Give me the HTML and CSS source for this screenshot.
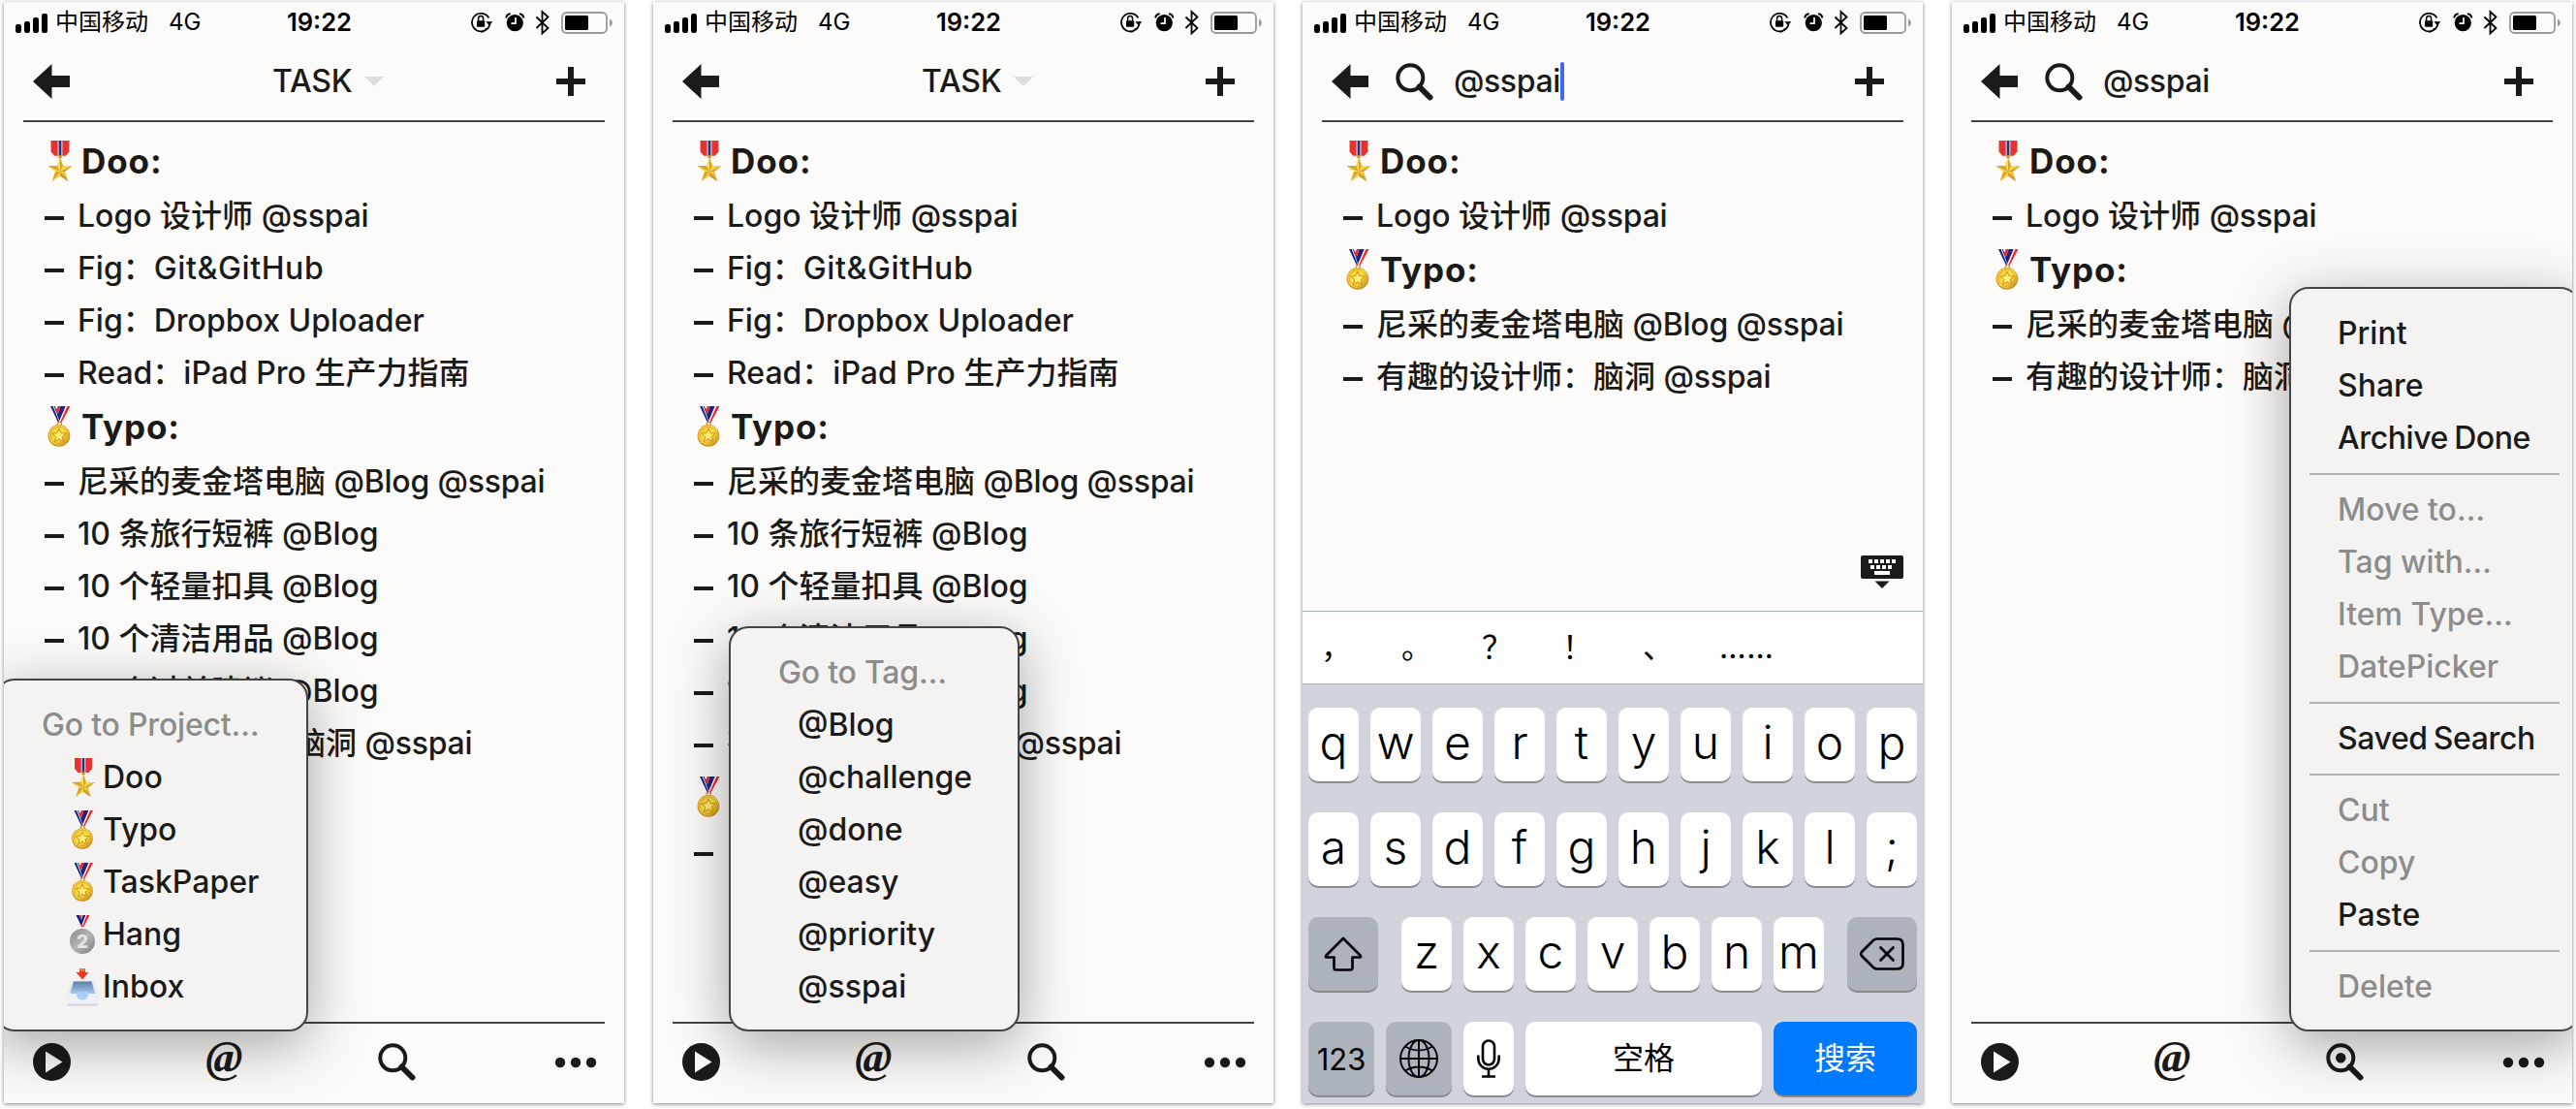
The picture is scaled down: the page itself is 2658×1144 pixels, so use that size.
FILE: index.html
```html
<!DOCTYPE html>
<html lang="zh-CN">
<head>
<meta charset="utf-8">
<title>TASK</title>
<link rel="stylesheet" href="styles.css">
</head>
<body>
<svg class="sprite" width="0" height="0" aria-hidden="true">
  <defs>
    <linearGradient id="gold" x1="0" y1="0" x2="1" y2="1"><stop offset="0" stop-color="#f2c62f"/><stop offset=".5" stop-color="#fbe04a"/><stop offset="1" stop-color="#c58a18"/></linearGradient>
    <linearGradient id="silver" x1="0" y1="0" x2="1" y2="1"><stop offset="0" stop-color="#8a8a8a"/><stop offset=".5" stop-color="#b4b4b4"/><stop offset="1" stop-color="#7c7c7c"/></linearGradient>
    <linearGradient id="tray" x1="0" y1="0" x2="0" y2="1"><stop offset="0" stop-color="#5b7da8"/><stop offset="1" stop-color="#a9cbf0"/></linearGradient>
    <symbol id="signal" viewBox="0 0 33 20"><rect x="0" y="11" width="6" height="9" rx="2.2"/><rect x="9" y="8" width="6" height="12" rx="2.2"/><rect x="18" y="4" width="6" height="16" rx="2.2"/><rect x="27" y="0" width="6" height="20" rx="2.2"/></symbol>
    <symbol id="status" viewBox="0 0 150 28">
      <path d="M20.5 15.5A9.3 9.3 0 1 1 19.4 9.5M17.2 20.4A9.3 9.3 0 0 1 11 24" fill="none" stroke="#000" stroke-width="1.7"/>
      <path d="M16.5 13.2h6.8l-3.4 4.2z"/><rect x="7" y="12.2" width="8.2" height="6.6" rx="1"/><path d="M8.6 12.5v-2.3a2.5 2.6 0 0 1 5 0v2.3" fill="none" stroke="#000" stroke-width="1.5"/>
      <circle cx="46.3" cy="14.6" r="8.6"/><path d="M37.2 9.5a5 5 0 0 1 4.500-4.300M55.400 9.500a5 5 0 0 0-4.500-4.300" stroke="#000" stroke-width="2" fill="none"/>
      <path d="M47 9v6.2h-4.500" fill="none" stroke="#fcfbf9" stroke-width="1.7"/>
      <path d="M68.500 8.500l12 11.500-6 5.500V3l6 5.500-12 11.500" fill="none" stroke="#000" stroke-width="1.8"/>
      <rect x="95" y="4" width="46" height="21" rx="4.500" fill="none" stroke="#999" stroke-width="1.8"/><rect x="98" y="7" width="24" height="15" rx="1.500"/><path d="M144 10.500q3 1.500 3 4t-3 4z" fill="#999"/>
    </symbol>
    <symbol id="back" viewBox="0 0 38 36"><path d="M0 18 19.500 0v12H38v12H19.500v12z"/></symbol>
    <symbol id="plus" viewBox="0 0 30 30"><path d="M12 0h6v12h12v6H18v12h-6V18H0v-6h12z"/></symbol>
    <symbol id="search" viewBox="0 0 39 39"><circle cx="15.3" cy="15.3" r="13" fill="none" stroke="#1a1a1a" stroke-width="4"/><path d="M24.500 24.500 35.500 35.500" stroke="#1a1a1a" stroke-width="6" stroke-linecap="round"/></symbol>
    <symbol id="play" viewBox="0 0 39 39"><circle cx="19.500" cy="19.500" r="19.500"/><path d="M13 8.500v22l17.500-11z" fill="#fbfaf8"/></symbol>
    <symbol id="dots" viewBox="0 0 44 12"><circle cx="6" cy="6" r="5.2"/><circle cx="22" cy="6" r="5.2"/><circle cx="38" cy="6" r="5.2"/></symbol>
    <symbol id="star" viewBox="0 0 38 40"><path d="M10 0h18v11l-3.500 4h-11L10 11z" fill="#e8322f"/><path d="M16.700 0h4.600v15h-4.600z" fill="#e9e3ee"/><path d="M17.700 0h2.600v15h-2.600z" fill="#24367f"/><circle cx="19" cy="16" r="1.800" fill="#cf9a20"/><path d="M19 16.500l3 8.300 9 .2-7.200 5.400L26.700 40 19 34.800 11.300 40l2.900-9.600L7 25l9-.2z" fill="url(#gold)"/><path d="M19 30.500V17l3 7.800zM19 30.500l12-5.500-7.200 5.400zM19 30.500l7.700 9.500L19 34.800zM19 30.500l-7.700 9.500 2.900-9.600zM19 30.500 7 25l9-.2z" fill="#b9791a" opacity=".55"/></symbol>
    <symbol id="medal" viewBox="0 0 38 40"><path d="M9.500 0h4.500l5.500 14-2 3z" fill="#1a2380"/><path d="M12 0h1l5.500 14-.6.6z" fill="#fff"/><path d="M29 0h-4.500l-7 15 2.500 2z" fill="#f5222b"/><path d="M24.500 0h-5l-3 9 2 6z" fill="#1a2380"/><path d="M26 0h-1.500l-6.500 15 1 1z" fill="#fff"/><path d="M17 0h2.500l-2.800 8-1.700-4z" fill="#f5222b"/><circle cx="18.300" cy="17.500" r="2" fill="none" stroke="#cfa02a" stroke-width="1.200"/><circle cx="18" cy="29" r="10.800" fill="#c8911e"/><circle cx="18" cy="28.500" r="10" fill="url(#gold)"/><circle cx="18" cy="28.600" r="8.300" fill="none" stroke="#d9a522" stroke-width=".8"/><path d="M18 22l2 4.400 4.800.4-3.700 3.200 1.200 4.700-4.300-2.500-4.300 2.500 1.200-4.700-3.700-3.200 4.800-.4z" fill="#ffec6b" stroke="#c48c17" stroke-width=".9"/></symbol>
    <symbol id="second" viewBox="0 0 38 40"><path d="M11.500 0h3.500l4 10-1.500 2.500z" fill="#1a2380"/><path d="M25.500 0H22l-5 11 2 1.500z" fill="#f5222b"/><path d="M21.500 0h-3l-2 6 1.500 4.500z" fill="#1a2380"/><path d="M22.500 0h-1l-4 10 .8 1z" fill="#fff"/><path d="M15.500 0h2l-1.200 5z" fill="#f5222b"/><circle cx="18" cy="27" r="13" fill="url(#silver)"/><text class="medal-digit" x="18" y="33.800" text-anchor="middle">2</text></symbol>
    <symbol id="inbox" viewBox="0 0 38 40"><path d="M15 1h6v4h3.500L18 12.500 11.500 5H15z" fill="#ee3424"/><path d="M15.300 1h5.400v3h-5.400z" fill="#f47b2a"/><path d="M7 13.500h22.500l4 14V39.500H2.700v-12z" fill="#e4e7ee"/><path d="M9 14.500h18.500l3.500 12.500H5.500z" fill="url(#tray)"/><path d="M3 27h8.500q1 6.500 6.500 6.500t6.500-6.500H33.500V39.500H2.700z" fill="#eef0f5"/><path d="M12 25h12q.5 8.500-6 8.500T12 25z" fill="#a6ccf7"/><path d="M2.700 37.500h30.800v2H2.700z" fill="#cfd3dc"/></symbol>
  </defs>
</svg>

<main class="gallery">

  <section class="phone">
    <header class="status"><svg class="signal"><use href="#signal"/></svg><span class="carrier">中国移动</span><span class="network">4G</span><span class="clock">19:22</span><svg class="indicators"><use href="#status"/></svg></header>
    <nav class="nav"><svg class="back"><use href="#back"/></svg><h1 class="title">TASK<i class="caret"></i></h1><svg class="plus"><use href="#plus"/></svg></nav>
    <ul class="list">
      <li class="project"><svg class="emoji"><use href="#star"/></svg>Doo:</li>
      <li class="task">Logo 设计师 <span class="tag">@sspai</span></li>
      <li class="task">Fig：<span class="wide">Git&amp;GitHub</span></li>
      <li class="task">Fig：Dropbox Uploader</li>
      <li class="task">Read：iPad Pro 生产力指南</li>
      <li class="project"><svg class="emoji"><use href="#medal"/></svg>Typo:</li>
      <li class="task">尼采的麦金塔电脑 <span class="tag">@Blog</span> <span class="tag">@sspai</span></li>
      <li class="task">10 条旅行短裤 @Blog</li>
      <li class="task">10 个轻量扣具 @Blog</li>
      <li class="task">10 个清洁用品 @Blog</li>
      <li class="task">10 个过关建议 @Blog</li>
      <li class="task">有趣的设计师：脑洞 <span class="tag">@sspai</span></li>
    </ul>
    <footer class="toolbar"><svg class="tool"><use href="#play"/></svg><span class="tool at">@</span><svg class="tool lens"><use href="#search"/></svg><svg class="more"><use href="#dots"/></svg></footer>
    <div class="menu menu-projects">
      <p class="menu-title">Go to Project…</p>
      <ul class="menu-list">
        <li><svg class="emoji"><use href="#star"/></svg>Doo</li>
        <li><svg class="emoji"><use href="#medal"/></svg>Typo</li>
        <li><svg class="emoji"><use href="#medal"/></svg>TaskPaper</li>
        <li><svg class="emoji"><use href="#second"/></svg>Hang</li>
        <li><svg class="emoji"><use href="#inbox"/></svg>Inbox</li>
      </ul>
    </div>
  </section>

  <section class="phone">
    <header class="status"><svg class="signal"><use href="#signal"/></svg><span class="carrier">中国移动</span><span class="network">4G</span><span class="clock">19:22</span><svg class="indicators"><use href="#status"/></svg></header>
    <nav class="nav"><svg class="back"><use href="#back"/></svg><h1 class="title">TASK<i class="caret"></i></h1><svg class="plus"><use href="#plus"/></svg></nav>
    <ul class="list">
      <li class="project"><svg class="emoji"><use href="#star"/></svg>Doo:</li>
      <li class="task">Logo 设计师 <span class="tag">@sspai</span></li>
      <li class="task">Fig：<span class="wide">Git&amp;GitHub</span></li>
      <li class="task">Fig：Dropbox Uploader</li>
      <li class="task">Read：iPad Pro 生产力指南</li>
      <li class="project"><svg class="emoji"><use href="#medal"/></svg>Typo:</li>
      <li class="task">尼采的麦金塔电脑 <span class="tag">@Blog</span> <span class="tag">@sspai</span></li>
      <li class="task">10 条旅行短裤 @Blog</li>
      <li class="task">10 个轻量扣具 @Blog</li>
      <li class="task">10 个清洁用品 @Blog</li>
      <li class="task">10 个过关建议 @Blog</li>
      <li class="task">有趣的设计师：脑洞 <span class="tag">@sspai</span></li>
      <li class="project"><svg class="emoji"><use href="#medal"/></svg></li>
      <li class="task"></li>
    </ul>
    <footer class="toolbar"><svg class="tool"><use href="#play"/></svg><span class="tool at">@</span><svg class="tool lens"><use href="#search"/></svg><svg class="more"><use href="#dots"/></svg></footer>
    <div class="menu menu-tags">
      <p class="menu-title">Go to Tag…</p>
      <ul class="menu-list"><li>@Blog</li><li>@challenge</li><li>@done</li><li>@easy</li><li>@priority</li><li>@sspai</li></ul>
    </div>
  </section>

  <section class="phone">
    <header class="status"><svg class="signal"><use href="#signal"/></svg><span class="carrier">中国移动</span><span class="network">4G</span><span class="clock">19:22</span><svg class="indicators"><use href="#status"/></svg></header>
    <nav class="nav"><svg class="back"><use href="#back"/></svg><svg class="find"><use href="#search"/></svg><span class="query">@sspai<i class="cursor"></i></span><svg class="plus"><use href="#plus"/></svg></nav>
    <ul class="list">
      <li class="project"><svg class="emoji"><use href="#star"/></svg>Doo:</li>
      <li class="task">Logo 设计师 <span class="tag">@sspai</span></li>
      <li class="project"><svg class="emoji"><use href="#medal"/></svg>Typo:</li>
      <li class="task">尼采的麦金塔电脑 <span class="tag">@Blog</span> <span class="tag">@sspai</span></li>
      <li class="task">有趣的设计师：脑洞 <span class="tag">@sspai</span></li>
    </ul>
    <svg class="dismiss" viewBox="0 0 44 34"><rect width="44" height="24" rx="2"/><path d="M14.500 26.500h15l-7.500 7.500z"/><path d="M8 4h4v4h-4zM14 4h4v4h-4zM20 4h4v4h-4zM26 4h4v4h-4zM32 4h4v4h-4zM10 10h4v4h-4zM16 10h4v4h-4zM22 10h4v4h-4zM28 10h4v4h-4zM14 16h16v4H14z" fill="#fff"/></svg>
    <div class="keyboard">
      <div class="candidates"><span>，</span><span>。</span><span>？</span><span>！</span><span>、</span><span class="dots6">……</span></div>
      <div class="keys"><b>q</b><b>w</b><b>e</b><b>r</b><b>t</b><b>y</b><b>u</b><b>i</b><b>o</b><b>p</b></div>
      <div class="keys"><b>a</b><b>s</b><b>d</b><b>f</b><b>g</b><b>h</b><b>j</b><b>k</b><b>l</b><b>;</b></div>
      <div class="keys">
        <b class="dark shift"><svg width="40" height="36" viewBox="0 0 40 36"><path d="M20 2 2.500 19.500q-1.500 2 .5 2H10.500V32q0 2.500 2 2.500h15q2 0 2-2.500V21.500H37q2 0 .5-2z" fill="none" stroke="#000" stroke-width="2.700" stroke-linejoin="round"/></svg></b>
        <b>z</b><b>x</b><b>c</b><b>v</b><b>b</b><b>n</b><b>m</b>
        <b class="dark delete"><svg width="46" height="34" viewBox="0 0 46 34"><path d="M18 1.500h20.500q6 0 6 6v19q0 6-6 6H18q-2.500 0-4-1.500L2 19q-1.500-2 0-4L14 3q1.500-1.500 4-1.500z" fill="none" stroke="#000" stroke-width="2.700"/><path d="M21.500 10.500 34.500 23.500M34.500 10.500 21.500 23.500" stroke="#000" stroke-width="2.700" stroke-linecap="round"/></svg></b>
      </div>
      <div class="keys">
        <b class="dark numbers">123</b>
        <b class="dark globe"><svg width="40" height="40" viewBox="0 0 40 40" fill="none" stroke="#000" stroke-width="1.900"><circle cx="20" cy="20" r="19"/><ellipse cx="20" cy="20" rx="10.500" ry="19"/><path d="M20 1v38M1 20h38M6 7.500q14 8 28 0M6 32.500q14-8 28 0"/></svg></b>
        <b class="mic"><svg width="24" height="40" viewBox="0 0 24 40" fill="none" stroke="#000" stroke-width="2.600"><rect x="6" y="1.500" width="12" height="25" rx="6"/><path d="M1.300 16.500v3.500a10.700 10.700 0 0 0 21.400 0v-3.500M12 31v7M5 38.500h14"/></svg></b>
        <b class="space">空格</b>
        <b class="go">搜索</b>
      </div>
    </div>
  </section>

  <section class="phone">
    <header class="status"><svg class="signal"><use href="#signal"/></svg><span class="carrier">中国移动</span><span class="network">4G</span><span class="clock">19:22</span><svg class="indicators"><use href="#status"/></svg></header>
    <nav class="nav"><svg class="back"><use href="#back"/></svg><svg class="find"><use href="#search"/></svg><span class="query">@sspai</span><svg class="plus"><use href="#plus"/></svg></nav>
    <ul class="list">
      <li class="project"><svg class="emoji"><use href="#star"/></svg>Doo:</li>
      <li class="task">Logo 设计师 <span class="tag">@sspai</span></li>
      <li class="project"><svg class="emoji"><use href="#medal"/></svg>Typo:</li>
      <li class="task">尼采的麦金塔电脑 <span class="tag">@Blog</span> <span class="tag">@sspai</span></li>
      <li class="task">有趣的设计师：脑洞 <span class="tag">@sspai</span></li>
    </ul>
    <footer class="toolbar"><svg class="tool"><use href="#play"/></svg><span class="tool at">@</span><svg class="tool lens" viewBox="0 0 39 39"><use href="#search"/><circle cx="15.3" cy="15.3" r="5.2"/></svg><svg class="more"><use href="#dots"/></svg></footer>
    <div class="menu menu-actions">
      <ul class="menu-list">
        <li>Print</li><li>Share</li><li class="tight">Archive Done</li>
        <li class="rule"></li>
        <li class="off">Move to…</li><li class="off">Tag with…</li><li class="off">Item Type…</li><li class="off">DatePicker</li>
        <li class="rule"></li>
        <li class="tight">Saved Search</li>
        <li class="rule"></li>
        <li class="off">Cut</li><li class="off">Copy</li><li>Paste</li>
        <li class="rule"></li>
        <li class="off">Delete</li>
      </ul>
    </div>
  </section>
</main>
</body>
</html>
```
FILE: styles.css
```css
* { box-sizing: border-box; margin: 0; padding: 0; }
body {
  background: #fff;
  color: #1a1a1a;
  font: 470 32px/54px Inter, "Noto Sans CJK SC", sans-serif;
  overflow: hidden;
}
ul { list-style: none; }
svg { display: block; flex: none; }
.sprite { position: absolute; }

.gallery { display: flex; gap: 30px; padding: 2px 4px; height: 1144px; }
.phone {
  position: relative;
  display: flex;
  flex-direction: column;
  flex: none;
  width: 640px;
  height: 1136px;
  background: #fcfbf9;
  box-shadow: 0 1px 4px rgba(0, 0, 0, .5);
  overflow: hidden;
}

/* Status bar */
.status {
  display: grid;
  grid-template-columns: 41px 117px 122px 189px 150px;
  align-items: center;
  height: 40px;
  padding-left: 12px;
  color: #000;
  font-size: 24px;
  font-weight: 400;
  line-height: 42px;
}
.signal { width: 33px; height: 20px; margin-top: 2px; }
.indicators { width: 150px; height: 28px; }
.clock { font-size: 25.5px; font-weight: 600; }

/* Navigation */
.nav {
  display: flex;
  align-items: center;
  height: 84px;
  margin: 0 20px;
  padding: 2px 20px 0 10px;
  border-bottom: 2px solid #444;
}
.nav svg, .toolbar svg, .dismiss { fill: #1a1a1a; }
.back { width: 38px; height: 36px; }
.plus { width: 30px; height: 30px; margin-left: auto; }
.title { display: flex; align-items: center; gap: 12px; margin-left: 209px; font-size: 32px; font-weight: 470; letter-spacing: -.2px; }
.caret { border: 10px solid transparent; border-top-color: #ddd; border-bottom-width: 0; }
.find { width: 39px; height: 39px; margin-left: 28px; }
.query { display: flex; align-items: center; margin-left: 21px; letter-spacing: -.4px; }
.cursor { width: 4px; height: 40px; border-radius: 2px; background: #4169e8; }

/* Outline */
.list { flex: 1; min-height: 0; padding: 11px 40px 0; white-space: nowrap; }
.emoji { width: 38px; height: 40px; margin-right: 1px; }
.project { display: flex; align-items: center; height: 58px; font-size: 35px; font-weight: 700; line-height: 60px; letter-spacing: .9px; }
.project .emoji { width: 40px; height: 42px; margin: 0 2px 0 -2px; }
.task { height: 54px; line-height: 55px; }
.task::before {
  content: "";
  display: inline-block;
  width: 20px;
  height: 4px;
  margin: 0 14px 0 2px;
  background: #1a1a1a;
  vertical-align: 7px;
}
.tag { letter-spacing: -.25px; }
.wide { letter-spacing: .6px; }

/* Toolbar */
.toolbar {
  display: flex;
  align-items: center;
  height: 84px;
  margin: 0 20px;
  padding: 0 8px 3px 10px;
  border-top: 2px solid #444;
}
.tool { width: 39px; height: 39px; }
.at { margin-left: 139px; font: italic 700 46px/30px "Liberation Serif", serif; text-align: center; }
.lens { margin-left: 139px; }
.more { width: 44px; height: 12px; margin-left: auto; }

/* Popup menus */
.menu {
  position: absolute;
  border: 2px solid #444;
  border-radius: 20px;
  background: #f4f3f1;
  box-shadow: 0 14px 60px rgba(0, 0, 0, .35);
  white-space: nowrap;
}
.menu-title, .off { color: #8c8c8c; }
.menu-title { letter-spacing: -.2px; }
.menu-list li { display: flex; align-items: center; height: 54px; }
.menu-projects { left: -9px; top: 698px; width: 323px; height: 364px; padding: 19px 0 0 46px; }
.menu-projects .menu-list { padding-left: 24px; }
.menu-tags { left: 78px; top: 644px; width: 300px; height: 418px; padding: 19px 0 0 49px; }
.menu-tags .menu-list { padding-left: 20px; }
.menu-actions { left: 348px; top: 294px; width: 300px; height: 768px; padding: 19px 19px 15px; }
.menu-actions li { padding-left: 29px; }
.menu-actions li.rule { height: 2px; margin: 9px 0; padding: 0; background: #b3b3b1; }
.menu-actions .tight { letter-spacing: -.4px; word-spacing: -2px; }
.medal-digit { fill: #e4e4e4; font: 800 19px Inter, sans-serif; }

/* Keyboard */
.dismiss { position: absolute; left: 576px; top: 571px; width: 44px; height: 34px; }
.keyboard { height: 508px; border-top: 1px solid #a9b1bc; background: #d1d4dc; color: #000; font-weight: 400; }
.candidates { display: flex; height: 75px; margin-bottom: 24px; padding-left: 19px; border-bottom: 1px solid #a9b1bc; background: #fdfdfe; line-height: 74px; }
.candidates span { width: 83px; }
.candidates .dots6 { width: auto; margin-left: -4px; letter-spacing: .5px; }
.keys { display: flex; gap: 12px; height: 76px; margin: 0 6px 32px; }
.keys b {
  display: flex;
  align-items: center;
  justify-content: center;
  width: 52px;
  padding-bottom: 5px;
  border-radius: 10px;
  background: #fff;
  box-shadow: 0 2px 0 #898b8f;
  font-size: 48px;
  font-weight: 330;
}
.keys .dark { padding-bottom: 0; background: #acb3bd; }
.keys .shift { width: 72px; margin-right: 12px; }
.keys .delete { width: 72px; margin-left: 12px; }
.keys .numbers { width: 68px; padding-top: 2px; font-size: 31px; font-weight: 400; }
.keys .globe { width: 68px; }
.keys .mic, .keys .space, .keys .go { padding-bottom: 0; }
.keys .space { width: 244px; font-size: 32px; font-weight: 400; }
.keys .go { width: 148px; background: #007aff; color: #fff; font-size: 32px; font-weight: 400; }
```
